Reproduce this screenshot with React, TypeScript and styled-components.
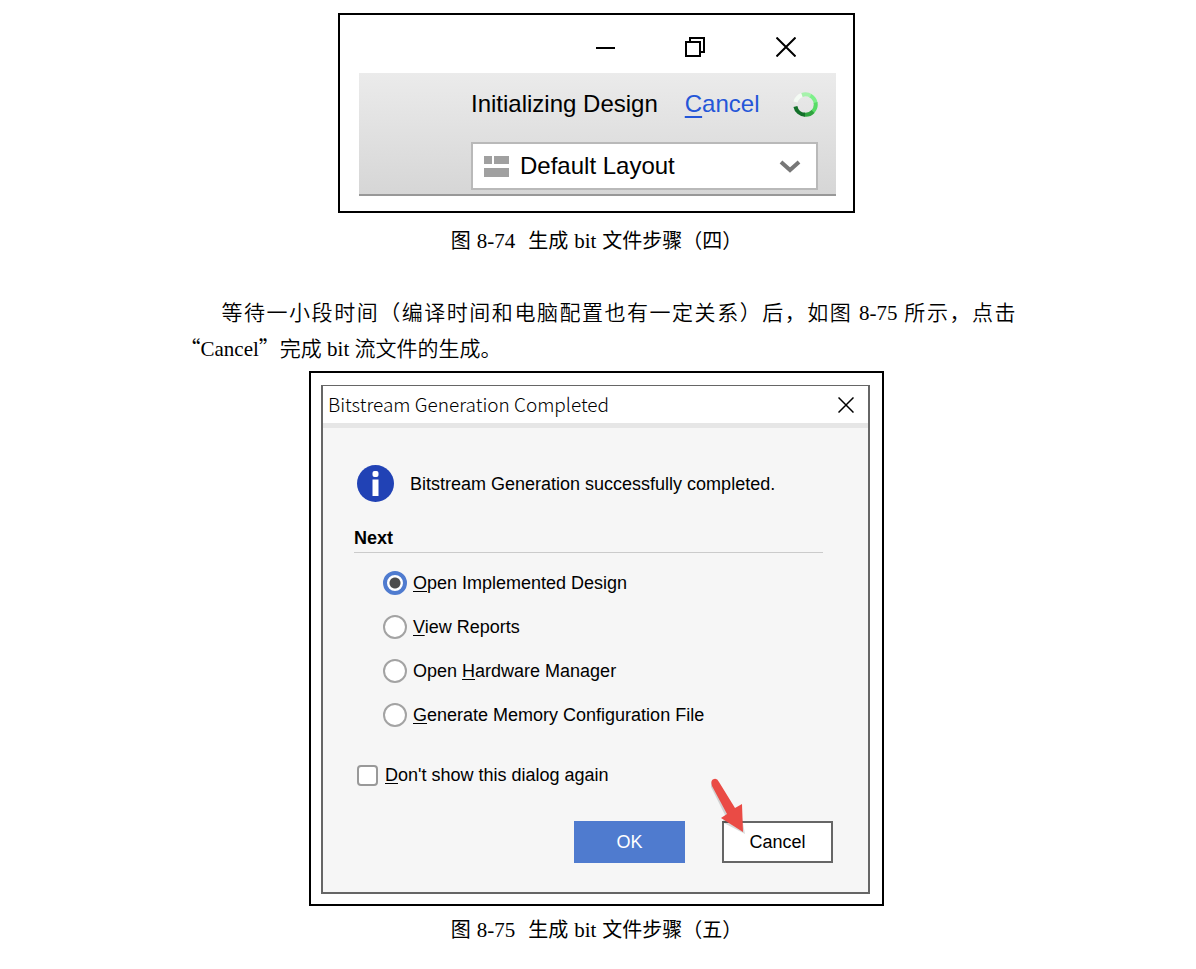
import React from "react";
import styled, { createGlobalStyle } from "styled-components";

const GlobalStyle = createGlobalStyle`
  *, *::before, *::after { box-sizing: border-box; }
  body { margin: 0; background: #fff; color: #000; }
  button, input, select { margin: 0; font: inherit; color: inherit; }
`;

const ui = `"Liberation Sans", Arial, sans-serif`;

const Page = styled.main`
  display: flex;
  flex-direction: column;
  align-items: center;
  padding: 13px 3px 20px 0;
`;

const Figure = styled.figure<{ $width: number; $gap: number }>`
  width: 100%;
  max-width: ${(p) => p.$width}px;
  margin: 0;
  display: flex;
  flex-direction: column;
  gap: ${(p) => p.$gap}px;
`;

const Frame = styled.div<{ $pad: string }>`
  border: 2px solid #000;
  padding: ${(p) => p.$pad};
  font-family: ${ui};
`;

const Caption = styled.figcaption`
  display: flex;
  justify-content: center;
  gap: 6px;
  font: 20px/36px "Liberation Serif", "Noto Sans CJK SC", serif;
`;

const Latin = styled.span<{ $after?: number }>`
  margin-right: ${(p) => p.$after ?? 0}px;
  font-size: 21px;
`;

const Paragraph = styled.p`
  width: 100%;
  max-width: 838px;
  margin: 36px 0 4px;
  padding-left: 2px;
  font: 350 21px/36px "Liberation Serif", "Noto Sans CJK SC", serif;
`;

const Line = styled.span<{ $first?: boolean }>`
  display: block;
  padding-left: ${(p) => (p.$first ? 42 : 0)}px;
  text-align-last: ${(p) => (p.$first ? "justify" : "left")};
`;

const WideQuote = styled.span`
  font-family: "Noto Sans CJK SC", sans-serif;
  line-height: 1;
`;

const WindowControls = styled.div`
  display: flex;
  justify-content: flex-end;
  height: 58px;
  padding: 6px 5px 0 0;
`;

const IconButton = styled.button<{ $width: number }>`
  display: flex;
  align-items: center;
  justify-content: center;
  width: ${(p) => p.$width}px;
  padding: 0;
  border: 0;
  background: transparent;
`;

const Toolbar = styled.div`
  display: flex;
  flex-direction: column;
  align-items: flex-end;
  gap: 23px;
  padding: 16px 18px 4px;
  border-bottom: 2px solid #989898;
  background: linear-gradient(#ebebeb, #d6d6d6);
  font-size: 24px;
  line-height: 30px;
`;

const Status = styled.div`
  display: flex;
  align-items: center;
  gap: 27px;
  width: 347px;

  svg {
    margin-left: auto;
  }
`;

const StatusLink = styled.a`
  color: #2456d8;
  text-decoration: none;
`;

const Mnemonic = styled.u<{ $thick?: boolean }>`
  text-decoration-thickness: ${(p) => (p.$thick ? 2 : 1)}px;
  text-underline-offset: ${(p) => (p.$thick ? 4 : 2)}px;
  text-decoration-skip-ink: none;
`;

const LayoutPicker = styled.label`
  display: flex;
  align-items: center;
  width: 347px;
  height: 48px;
  padding: 0 15px 0 11px;
  border: 2px solid #b9b9b9;
  background: #fff;

  select {
    flex: 1;
    margin-left: 11px;
    padding: 0;
    border: 0;
    appearance: none;
    background: transparent;
    line-height: 30px;
  }
`;

const Dialog = styled.section`
  border: 2px solid #666;
  border-top-width: 1px;
  background: #f6f6f6;
  font-size: 18px;
  line-height: 24px;
`;

const DialogTitle = styled.header`
  display: flex;
  justify-content: space-between;
  height: 42px;
  padding-left: 5px;
  border-bottom: 5px solid #e6e6e6;
  background: #fff;

  h2 {
    margin: 0;
    font: 300 19px/36px "Noto Sans CJK SC", "Noto Sans", sans-serif;
  }
`;

const DialogBody = styled.form`
  padding: 37px 35px 29px 31px;
`;

const Message = styled.div`
  display: flex;
  align-items: center;
  gap: 16px;
  padding: 0 0 23px 3px;
`;

const Options = styled.fieldset`
  margin: 0 10px 16px 0;
  padding: 0;
  border: 0;

  legend {
    width: 100%;
    margin-bottom: 8px;
    padding: 0 0 2px;
    border-bottom: 1px solid #cbcbcb;
    font-weight: 700;
  }
`;

const Choice = styled.label<{ $indent: number; $gap: number }>`
  display: flex;
  align-items: center;
  gap: ${(p) => p.$gap}px;
  height: 44px;
  padding-left: ${(p) => p.$indent}px;
`;

const Radio = styled.input`
  appearance: none;
  width: 24px;
  height: 24px;
  border: 2px solid #a3a3a3;
  border-radius: 50%;
  background: #fff;

  &:checked {
    border: 4px solid #4f7bcf;
    background: radial-gradient(circle, #4c4c4c 5px, #fff 6px);
  }
`;

const Checkbox = styled.input`
  appearance: none;
  width: 21px;
  height: 21px;
  border: 2px solid #999;
  border-radius: 4px;
  background: #fff;

  &:checked {
    background: #4f7bcf;
  }
`;

const Actions = styled.div`
  display: flex;
  justify-content: flex-end;
  gap: 37px;
  margin-top: 24px;
`;

const ActionButton = styled.button<{ $primary?: boolean }>`
  position: relative;
  width: 111px;
  height: 42px;
  padding: 0;
  border: 2px solid ${(p) => (p.$primary ? "#4f7bcf" : "#666")};
  background: ${(p) => (p.$primary ? "#4f7bcf" : "#fff")};
  color: ${(p) => (p.$primary ? "#fff" : "#000")};
`;

const Pointer = styled.svg`
  position: absolute;
  left: -18px;
  top: -48px;
  pointer-events: none;
`;

const options = [
  { before: "", key: "O", after: "pen Implemented Design" },
  { before: "", key: "V", after: "iew Reports" },
  { before: "Open ", key: "H", after: "ardware Manager" },
  { before: "", key: "G", after: "enerate Memory Configuration File" },
];

const Cross = ({ size }: { size: number }) => (
  <svg width={size} height={size} viewBox={`0 0 ${size} ${size}`} stroke="#000" strokeWidth={size > 18 ? 2 : 1.5}>
    <path d={`M.5 .5 L${size - 0.5} ${size - 0.5} M${size - 0.5} .5 L.5 ${size - 0.5}`} />
  </svg>
);

const Spinner = () => (
  <svg width="25" height="25" viewBox="0 0 25 25" fill="none" strokeWidth="4">
    <path d="M2.5 10 A10.3 10.3 0 0 1 9 3" stroke="#f4fbf4" />
    <path d="M9 3 A10.3 10.3 0 0 1 18 4" stroke="#a6f2ab" />
    <path d="M17.5 3.7 A10.3 10.3 0 0 1 22.6 11" stroke="#7df08a" />
    <path d="M22.5 10.5 A10.3 10.3 0 0 1 19.5 20" stroke="#58dc66" />
    <path d="M20 19.5 A10.3 10.3 0 0 1 11 22.6" stroke="#2fa33f" />
    <path d="M12 22.8 A10.3 10.3 0 0 1 2.4 14.5" stroke="#13702a" />
  </svg>
);

const FigureCaption = ({ number, step }: { number: string; step: string }) => (
  <Caption>
    <span>图</span>
    <Latin $after={7}>{number}</Latin>
    <span>生成</span>
    <Latin>bit</Latin>
    <span>文件步骤（{step}）</span>
  </Caption>
);

export default function App() {
  return (
    <>
      <GlobalStyle />
      <Page>
        <Figure $width={517} $gap={10}>
          <Frame $pad="0 17px 15px 19px">
            <WindowControls>
              <IconButton $width={90} type="button" aria-label="Minimize">
                <svg width="20" height="20" viewBox="0 0 20 20">
                  <path d="M0 11H19" stroke="#000" strokeWidth="2" />
                </svg>
              </IconButton>
              <IconButton $width={90} type="button" aria-label="Restore">
                <svg width="22" height="20" viewBox="0 0 22 20" fill="none" stroke="#000" strokeWidth="2">
                  <path d="M1 5H15V19H1ZM5 5V1H19V15H15" />
                </svg>
              </IconButton>
              <IconButton $width={90} type="button" aria-label="Close">
                <Cross size={20} />
              </IconButton>
            </WindowControls>
            <Toolbar>
              <Status>
                <span>Initializing Design</span>
                <StatusLink href="#cancel">
                  <Mnemonic $thick>C</Mnemonic>ancel
                </StatusLink>
                <Spinner />
              </Status>
              <LayoutPicker>
                <svg width="25" height="21" viewBox="0 0 25 21" fill="#a0a0a0">
                  <path d="M0 0H8V8H0ZM10 0H25V8H10ZM0 12H25V21H0Z" />
                </svg>
                <select aria-label="Layout">
                  <option>Default Layout</option>
                </select>
                <svg width="22" height="14" viewBox="0 0 22 14" fill="none" stroke="#777" strokeWidth="4">
                  <path d="M2 3L11 11L20 3" />
                </svg>
              </LayoutPicker>
            </Toolbar>
          </Frame>
          <FigureCaption number="8-74" step="四" />
        </Figure>

        <Paragraph>
          <Line $first>等待一小段时间（编译时间和电脑配置也有一定关系）后，如图 8-75 所示，点击</Line>
          <Line>
            <WideQuote>“</WideQuote>Cancel<WideQuote>”</WideQuote>完成 bit 流文件的生成。
          </Line>
        </Paragraph>

        <Figure $width={575} $gap={6}>
          <Frame $pad="12px 12px 10px 10px">
            <Dialog>
              <DialogTitle>
                <h2>Bitstream Generation Completed</h2>
                <IconButton $width={44} type="button" aria-label="Close dialog">
                  <Cross size={16} />
                </IconButton>
              </DialogTitle>
              <DialogBody onSubmit={(e) => e.preventDefault()}>
                <Message>
                  <svg width="37" height="38" viewBox="0 0 37 38">
                    <circle cx="18.5" cy="18.5" r="18.5" fill="#2142b5" />
                    <rect x="15.5" y="6" width="6" height="6" rx="2" fill="#fff" />
                    <path d="M15.5 14.5H21.5V31H15.5Z" fill="#fff" />
                  </svg>
                  <span>Bitstream Generation successfully completed.</span>
                </Message>
                <Options>
                  <legend>Next</legend>
                  {options.map((o, i) => (
                    <Choice key={o.after} $indent={29} $gap={6}>
                      <Radio type="radio" name="next" defaultChecked={i === 0} />
                      <span>
                        {o.before}
                        <Mnemonic>{o.key}</Mnemonic>
                        {o.after}
                      </span>
                    </Choice>
                  ))}
                </Options>
                <Choice $indent={3} $gap={7}>
                  <Checkbox type="checkbox" />
                  <span>
                    <Mnemonic>D</Mnemonic>on't show this dialog again
                  </span>
                </Choice>
                <Actions>
                  <ActionButton $primary type="submit">
                    OK
                  </ActionButton>
                  <ActionButton type="button">
                    Cancel
                    <Pointer width="48" height="64" viewBox="0 0 48 64">
                      <path
                        d="M13 9 L28 36 L34 32 L39 59 L16 47 L20 42 L5 12 Q4 6 9 5 Z"
                        fill="#000"
                        opacity=".15"
                      />
                      <path d="M13 7 L29 33 L36 29 L37 57 L15 43 L21 39 L6 11 Q4 5 8 4 Q11 3 13 7 Z" fill="#ea4b45" />
                    </Pointer>
                  </ActionButton>
                </Actions>
              </DialogBody>
            </Dialog>
          </Frame>
          <FigureCaption number="8-75" step="五" />
        </Figure>
      </Page>
    </>
  );
}
